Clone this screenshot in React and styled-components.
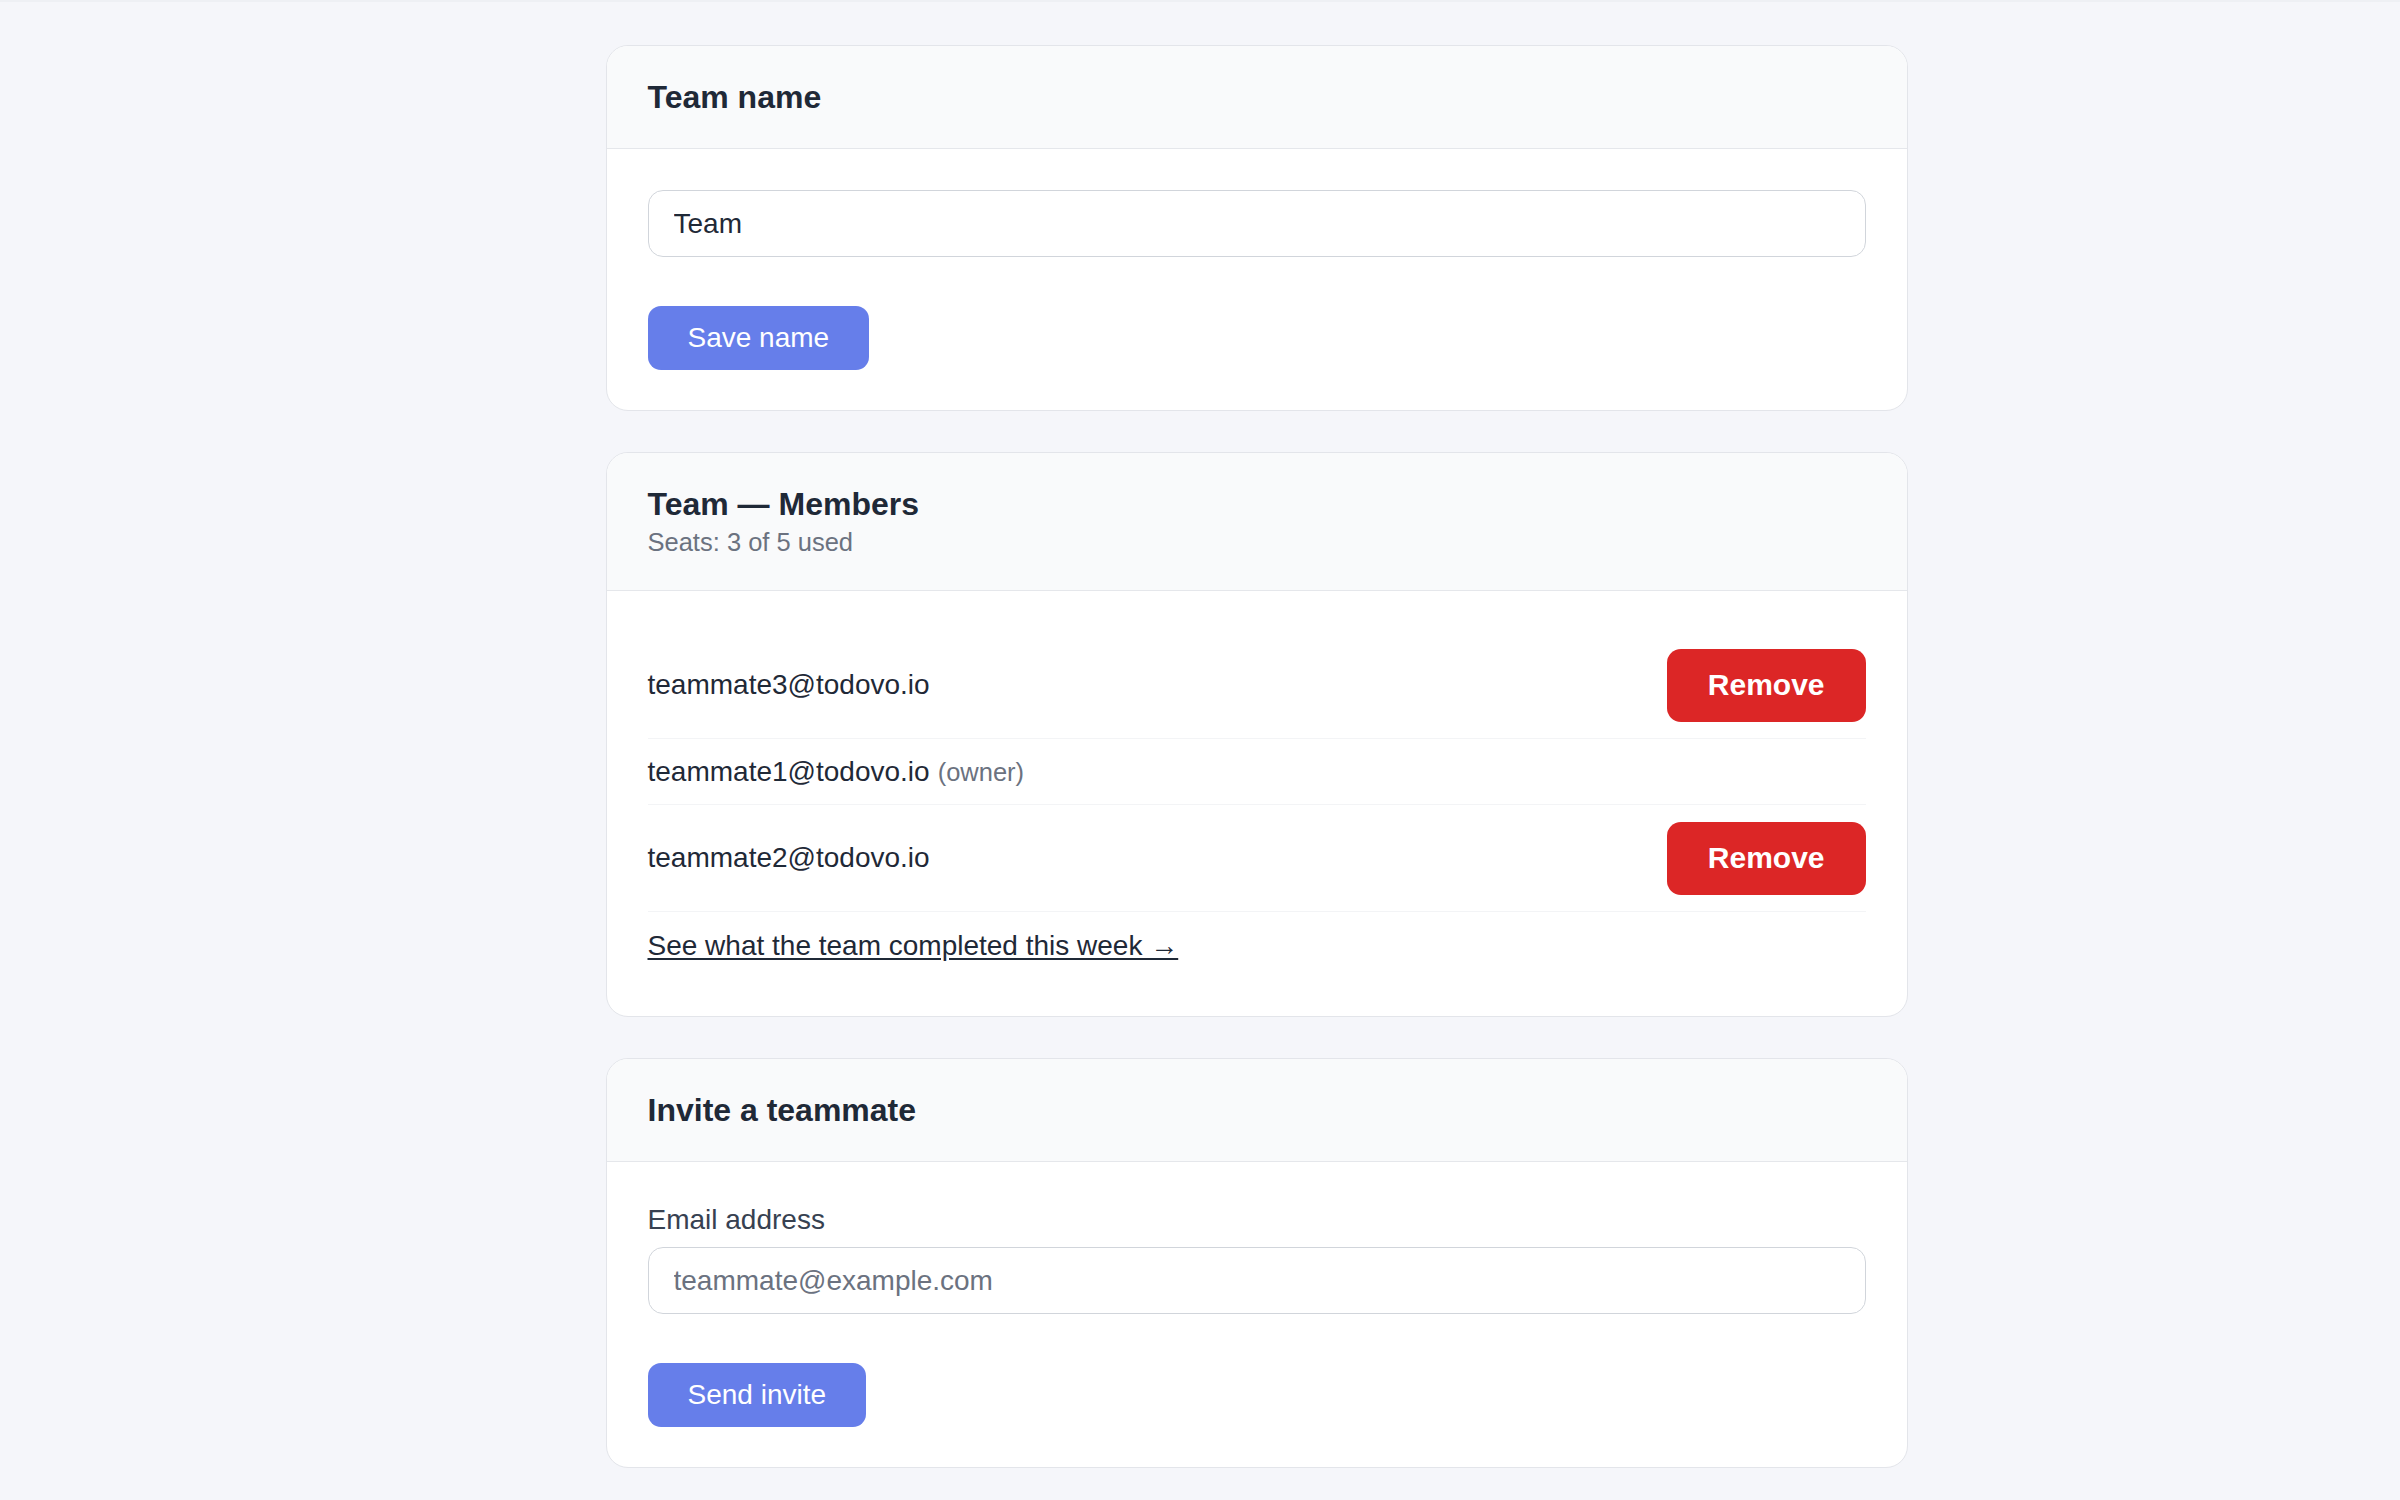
import styled, { createGlobalStyle } from "styled-components";

const GlobalStyle = createGlobalStyle`
  html, body {
    margin: 0;
    background: #f5f6fa;
    font-family: "Liberation Sans", Arial, sans-serif;
    color: #1f2937;
  }
  * {
    box-sizing: border-box;
  }
`;

const Page = styled.div`
  min-height: 1500px;
  padding: 45px 0 40px 113px;
  box-shadow: inset 0 2px 0 #eef0f4;
`;

const Column = styled.main`
  width: 1302px;
  margin: 0 auto;
  display: flex;
  flex-direction: column;
  gap: 41px;
`;

const Card = styled.section`
  background: #fff;
  border: 1px solid #e3e5ea;
  border-radius: 22px;
  overflow: hidden;
`;

const CardHeader = styled.header`
  background: #f9fafb;
  border-bottom: 1px solid #e5e7eb;
  padding: 32px 41px;
`;

const Title = styled.h2`
  margin: 0;
  font-size: 32px;
  line-height: 38px;
  font-weight: 700;
  color: #1f2937;
`;

const Subtitle = styled.p`
  margin: 4px 0 0;
  font-size: 25.5px;
  line-height: 31px;
  color: #6b7280;
`;

const CardBody = styled.div`
  padding: 41px 41px 40px;
`;

const Label = styled.label`
  display: block;
  font-size: 28px;
  line-height: 33px;
  color: #374151;
  margin-bottom: 11px;
`;

const Input = styled.input`
  display: block;
  width: 100%;
  height: 67px;
  padding: 0 25px;
  border: 1px solid #d1d5db;
  border-radius: 15px;
  background: #fff;
  font-family: inherit;
  font-size: 28px;
  color: #1f2937;
  outline: none;

  &::placeholder {
    color: #6b7280;
  }
`;

const Button = styled.button`
  display: inline-flex;
  align-items: center;
  justify-content: center;
  height: ${({ $danger }) => ($danger ? "73px" : "64px")};
  padding: 0 ${({ $danger }) => ($danger ? "41px" : "40px")};
  margin-top: ${({ $danger }) => ($danger ? "0" : "49px")};
  border: none;
  border-radius: ${({ $danger }) => ($danger ? "14px" : "13px")};
  background: ${({ $danger }) => ($danger ? "#dc2626" : "#667eea")};
  color: #fff;
  font-family: inherit;
  font-size: ${({ $danger }) => ($danger ? "30px" : "28px")};
  font-weight: ${({ $danger }) => ($danger ? 700 : 400)};
  cursor: pointer;
`;

const MemberList = styled.ul`
  list-style: none;
  margin: 0;
  padding: 0;
`;

const MemberRow = styled.li`
  display: flex;
  align-items: center;
  justify-content: space-between;
  padding: 16.5px 0;
  border-bottom: 1px solid #f3f4f6;
  font-size: 28px;
  line-height: 32px;
  color: #1f2937;
`;

const Owner = styled.span`
  margin-left: 8px;
  font-size: 25.5px;
  color: #6b7280;
`;

const LinkRow = styled.div`
  padding: 17px 0 13px;
  font-size: 28px;
  line-height: 34px;
`;

const WeekLink = styled.a`
  color: #1f2937;
  text-decoration: underline;
  text-underline-offset: 3px;
`;

const members = [
  { email: "teammate3@todovo.io", owner: false },
  { email: "teammate1@todovo.io", owner: true },
  { email: "teammate2@todovo.io", owner: false },
];

export default function App() {
  return (
    <>
      <GlobalStyle />
      <Page>
        <Column>
          <Card>
            <CardHeader>
              <Title>Team name</Title>
            </CardHeader>
            <CardBody>
              <Input defaultValue="Team" />
              <Button>Save name</Button>
            </CardBody>
          </Card>

          <Card>
            <CardHeader>
              <Title>Team — Members</Title>
              <Subtitle>Seats: 3 of 5 used</Subtitle>
            </CardHeader>
            <CardBody>
              <MemberList>
                {members.map((m) => (
                  <MemberRow key={m.email}>
                    <span>
                      {m.email}
                      {m.owner && <Owner>(owner)</Owner>}
                    </span>
                    {!m.owner && <Button $danger>Remove</Button>}
                  </MemberRow>
                ))}
              </MemberList>
              <LinkRow>
                <WeekLink href="#">See what the team completed this week →</WeekLink>
              </LinkRow>
            </CardBody>
          </Card>

          <Card>
            <CardHeader>
              <Title>Invite a teammate</Title>
            </CardHeader>
            <CardBody>
              <Label htmlFor="invite-email">Email address</Label>
              <Input id="invite-email" type="email" placeholder="teammate@example.com" />
              <Button>Send invite</Button>
            </CardBody>
          </Card>
        </Column>
      </Page>
    </>
  );
}
